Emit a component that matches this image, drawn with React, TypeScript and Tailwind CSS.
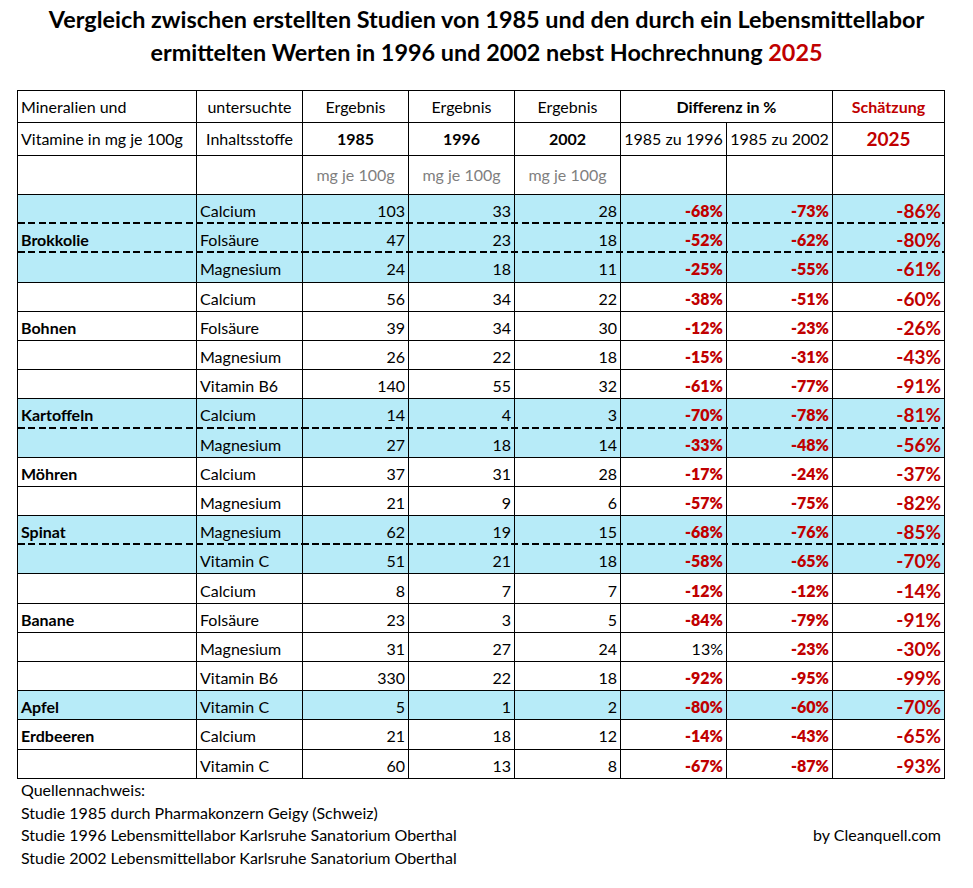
import React from "react";

type Row = {
  name?: string;
  nut: string;
  v: [number, number, number];
  d1: string;
  d2: string;
  e: string;
  blue?: boolean;
  dashed?: boolean;
};

const rows: Row[] = [
  { nut: "Calcium", v: [103, 33, 28], d1: "-68%", d2: "-73%", e: "-86%", blue: true, dashed: true },
  { name: "Brokkolie", nut: "Folsäure", v: [47, 23, 18], d1: "-52%", d2: "-62%", e: "-80%", blue: true, dashed: true },
  { nut: "Magnesium", v: [24, 18, 11], d1: "-25%", d2: "-55%", e: "-61%", blue: true },
  { nut: "Calcium", v: [56, 34, 22], d1: "-38%", d2: "-51%", e: "-60%" },
  { name: "Bohnen", nut: "Folsäure", v: [39, 34, 30], d1: "-12%", d2: "-23%", e: "-26%" },
  { nut: "Magnesium", v: [26, 22, 18], d1: "-15%", d2: "-31%", e: "-43%" },
  { nut: "Vitamin B6", v: [140, 55, 32], d1: "-61%", d2: "-77%", e: "-91%" },
  { name: "Kartoffeln", nut: "Calcium", v: [14, 4, 3], d1: "-70%", d2: "-78%", e: "-81%", blue: true, dashed: true },
  { nut: "Magnesium", v: [27, 18, 14], d1: "-33%", d2: "-48%", e: "-56%", blue: true },
  { name: "Möhren", nut: "Calcium", v: [37, 31, 28], d1: "-17%", d2: "-24%", e: "-37%" },
  { nut: "Magnesium", v: [21, 9, 6], d1: "-57%", d2: "-75%", e: "-82%" },
  { name: "Spinat", nut: "Magnesium", v: [62, 19, 15], d1: "-68%", d2: "-76%", e: "-85%", blue: true, dashed: true },
  { nut: "Vitamin C", v: [51, 21, 18], d1: "-58%", d2: "-65%", e: "-70%", blue: true },
  { nut: "Calcium", v: [8, 7, 7], d1: "-12%", d2: "-12%", e: "-14%" },
  { name: "Banane", nut: "Folsäure", v: [23, 3, 5], d1: "-84%", d2: "-79%", e: "-91%" },
  { nut: "Magnesium", v: [31, 27, 24], d1: "13%", d2: "-23%", e: "-30%" },
  { nut: "Vitamin B6", v: [330, 22, 18], d1: "-92%", d2: "-95%", e: "-99%" },
  { name: "Apfel", nut: "Vitamin C", v: [5, 1, 2], d1: "-80%", d2: "-60%", e: "-70%", blue: true },
  { name: "Erdbeeren", nut: "Calcium", v: [21, 18, 12], d1: "-14%", d2: "-43%", e: "-65%" },
  { nut: "Vitamin C", v: [60, 13, 8], d1: "-67%", d2: "-87%", e: "-93%" },
];

const GRID = "grid grid-cols-[179px_106px_106px_106px_106px_106px_106px_112px]";
const HC = "flex items-center justify-center border-r border-black";
const DC = "flex items-center border-r border-black pt-[4px] h-full";

function Pct({ s }: { s: string }) {
  const neg = s.startsWith("-");
  return (
    <div className={`${DC} justify-end pr-[3px] ${neg ? "font-extrabold text-[#c00000]" : "text-black"}`}>
      {s}
    </div>
  );
}

export default function App() {
  return (
    <div
      className="w-[973px] h-[888px] bg-white text-black text-[16px] leading-[20px]"
      style={{ fontFamily: "Lato, 'Open Sans', sans-serif" }}
    >
      <div className="h-[90px] pt-[3px] text-center font-bold text-[23.4px] leading-[33px]">
        <div>Vergleich zwischen erstellten Studien von 1985 und den durch ein Lebensmittellabor</div>
        <div>
          ermittelten Werten in 1996 und 2002 nebst Hochrechnung{" "}
          <span className="text-[#c00000]">2025</span>
        </div>
      </div>

      <div className="ml-[17px] w-[928px] border-l border-t border-black">
        {/* header row 1 */}
        <div className={`${GRID} h-[32px] border-b border-black`}>
          <div className="flex items-center border-r border-black pl-[3px]">Mineralien und</div>
          <div className={HC}>untersuchte</div>
          <div className={HC}>Ergebnis</div>
          <div className={HC}>Ergebnis</div>
          <div className={HC}>Ergebnis</div>
          <div className={`${HC} col-span-2 font-bold`}>Differenz in %</div>
          <div className={`${HC} font-bold text-[#c00000]`}>Schätzung</div>
        </div>
        {/* header row 2 */}
        <div className={`${GRID} h-[33px] border-b border-black`}>
          <div className="flex items-center border-r border-black pl-[3px]">Vitamine in mg je 100g</div>
          <div className={HC}>Inhaltsstoffe</div>
          <div className={`${HC} font-bold`}>1985</div>
          <div className={`${HC} font-bold`}>1996</div>
          <div className={`${HC} font-bold`}>2002</div>
          <div className={HC}>1985 zu 1996</div>
          <div className={HC}>1985 zu 2002</div>
          <div className={`${HC} font-bold text-[#c00000] text-[19px]`}>2025</div>
        </div>
        {/* header row 3 */}
        <div className={`${GRID} h-[39px] border-b border-black`}>
          <div className={HC}></div>
          <div className={HC}></div>
          <div className={`${HC} text-[#7f7f7f]`}>mg je 100g</div>
          <div className={`${HC} text-[#7f7f7f]`}>mg je 100g</div>
          <div className={`${HC} text-[#7f7f7f]`}>mg je 100g</div>
          <div className={HC}></div>
          <div className={HC}></div>
          <div className={HC}></div>
        </div>

        {rows.map((r, i) => (
          <div
            key={i}
            className={`${GRID} relative h-[29.2px] border-b ${r.dashed ? "border-transparent" : "border-black"} ${
              r.blue ? "bg-[#b7ebf8]" : "bg-white"
            }`}
          >
            <div className={`${DC} pl-[3px] font-bold`}>{r.name ?? ""}</div>
            <div className={`${DC} pl-[3px]`}>{r.nut}</div>
            <div className={`${DC} justify-end pr-[3px]`}>{r.v[0]}</div>
            <div className={`${DC} justify-end pr-[3px]`}>{r.v[1]}</div>
            <div className={`${DC} justify-end pr-[3px]`}>{r.v[2]}</div>
            <Pct s={r.d1} />
            <Pct s={r.d2} />
            <div className={`${DC} justify-end pr-[3px] font-bold text-[19px] text-[#c00000]`}>{r.e}</div>
            {r.dashed && (
              <div className="absolute left-0 right-0 bottom-[-1px] h-[2px] bg-[repeating-linear-gradient(90deg,#000_0px,#000_7px,transparent_7px,transparent_10.5px)]" />
            )}
          </div>
        ))}
      </div>

      <div className="ml-[17px] w-[928px] pl-[4px] pr-[4px] leading-[22.8px]">
        <div>Quellennachweis:</div>
        <div>Studie 1985 durch Pharmakonzern Geigy (Schweiz)</div>
        <div className="flex justify-between">
          <span>Studie 1996 Lebensmittellabor Karlsruhe Sanatorium Oberthal</span>
          <span>by Cleanquell.com</span>
        </div>
        <div>Studie 2002 Lebensmittellabor Karlsruhe Sanatorium Oberthal</div>
      </div>
    </div>
  );
}
